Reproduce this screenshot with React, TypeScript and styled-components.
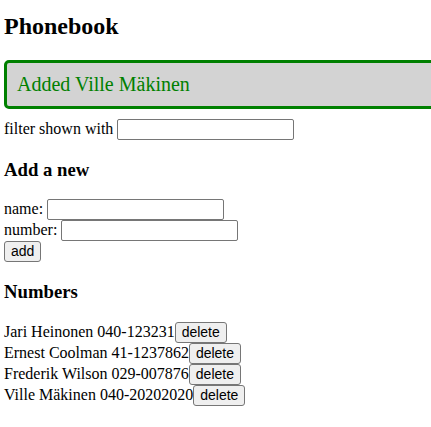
import React from "react";
import styled, { createGlobalStyle } from "styled-components";

const Global = createGlobalStyle`
  html, body { margin: 0; padding: 0; background: #fff; }
  body {
    font-family: "Liberation Serif", "Times New Roman", serif;
    font-size: 16px;
    color: #000;
    padding: 1px 0 0 4px;
    overflow: hidden;
  }
`;

const Page = styled.div`
  width: 440px;
`;

const Title = styled.h2`
  font-size: 24px;
  font-weight: bold;
  margin: 12px 0 19.92px;
`;

const Notification = styled.div`
  color: green;
  background: lightgrey;
  font-size: 20px;
  border: 3px solid green;
  border-radius: 5px;
  padding: 10px;
  margin-bottom: 10px;
`;

const SubTitle = styled.h3`
  font-size: 18.72px;
  font-weight: bold;
  margin: 18.72px 0;
`;

const Field = styled.div`
  line-height: normal;
`;

const TextInput = styled.input`
  box-sizing: border-box;
  width: 177px;
  height: 21px;
  padding: 1px 2px;
  border: 1px solid #767676;
  border-radius: 2px;
  font-family: "Liberation Sans", Arial, sans-serif;
  font-size: 13.33px;
  vertical-align: baseline;
  background: #fff;
`;

const Button = styled.button`
  font-family: "Liberation Sans", Arial, sans-serif;
  font-size: 14px;
  line-height: 17px;
  padding: 1px 6px;
  border: 1px solid #767676;
  border-radius: 3px;
  background: #efefef;
  color: #000;
`;

const Row = styled.div``;

const persons = [
  { name: "Jari Heinonen", number: "040-123231" },
  { name: "Ernest Coolman", number: "41-1237862" },
  { name: "Frederik Wilson", number: "029-007876" },
  { name: "Ville Mäkinen", number: "040-20202020" },
];

export default function App() {
  return (
    <Page>
      <Global />
      <Title>Phonebook</Title>
      <Notification>Added Ville Mäkinen</Notification>
      <Field>
        filter shown with <TextInput />
      </Field>
      <SubTitle>Add a new</SubTitle>
      <form onSubmit={(e) => e.preventDefault()}>
        <Field>
          name: <TextInput />
        </Field>
        <Field>
          number: <TextInput />
        </Field>
        <div>
          <Button type="submit">add</Button>
        </div>
      </form>
      <SubTitle>Numbers</SubTitle>
      {persons.map((p) => (
        <Row key={p.name}>
          {p.name} {p.number}
          <Button>delete</Button>
        </Row>
      ))}
    </Page>
  );
}
